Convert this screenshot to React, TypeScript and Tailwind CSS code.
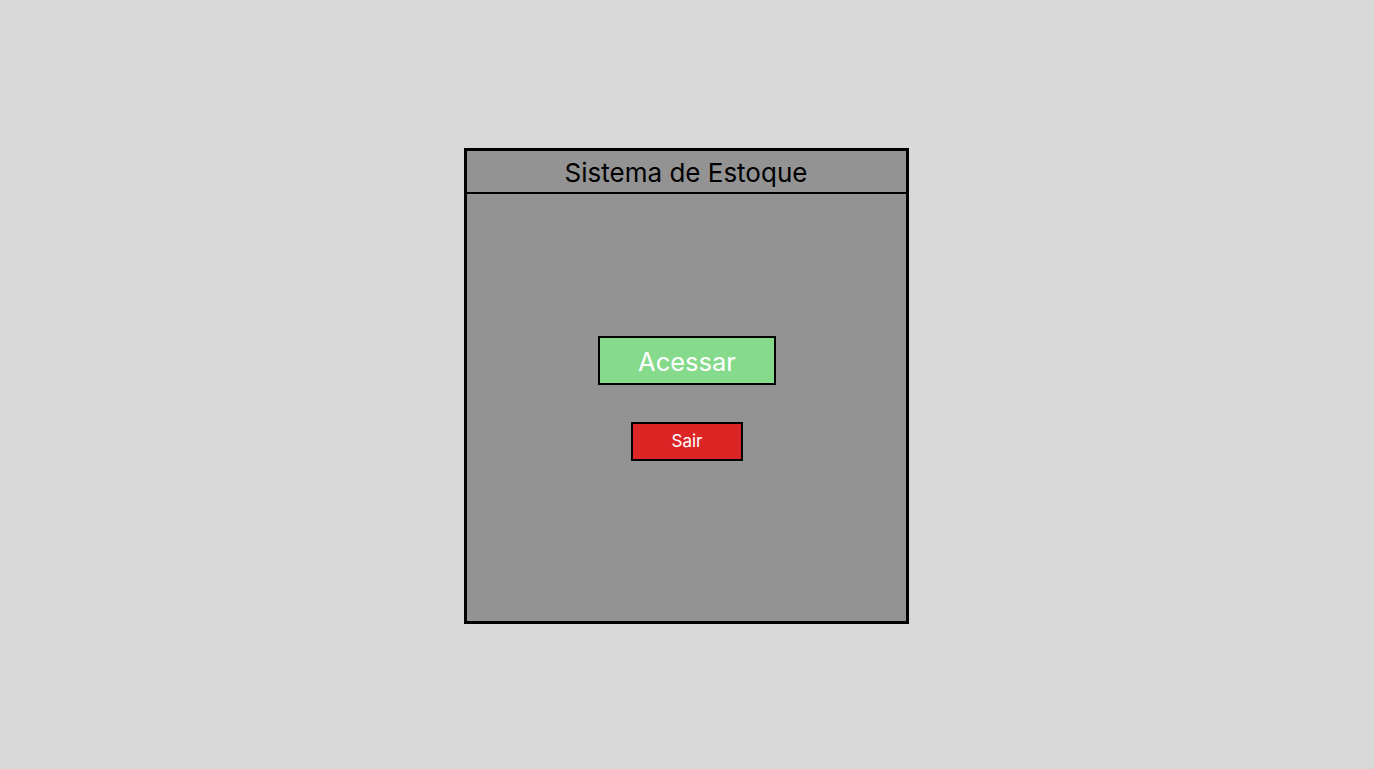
import React from "react";

const App: React.FC = () => {
  return (
    <main className="flex min-h-screen w-full items-center justify-center bg-[#d9d9d9] font-['Inter','Noto_Sans',sans-serif]">
      <div className="mt-[3px] mr-[2px] flex h-[476px] w-[445px] flex-col border-[3px] border-black bg-[#939393]">
        {/* Header */}
        <header className="flex h-[43px] items-center justify-center border-b-2 border-black">
          <h1 className="pt-[2px] text-[26px] leading-none text-black">
            Sistema de Estoque
          </h1>
        </header>

        {/* Actions */}
        <div className="flex flex-col items-center pt-[142px] pl-[2px]">
          <button
            type="button"
            className="flex h-[49px] w-[178px] items-center justify-center border-2 border-black bg-[#86da8b] pt-[3px] text-[25.5px] text-white"
          >
            Acessar
          </button>
          <button
            type="button"
            className="mt-[37px] flex h-[39px] w-[112px] items-center justify-center border-2 border-black bg-[#dc2626] text-[17px] text-white"
          >
            Sair
          </button>
        </div>
      </div>
    </main>
  );
};

export default App;
